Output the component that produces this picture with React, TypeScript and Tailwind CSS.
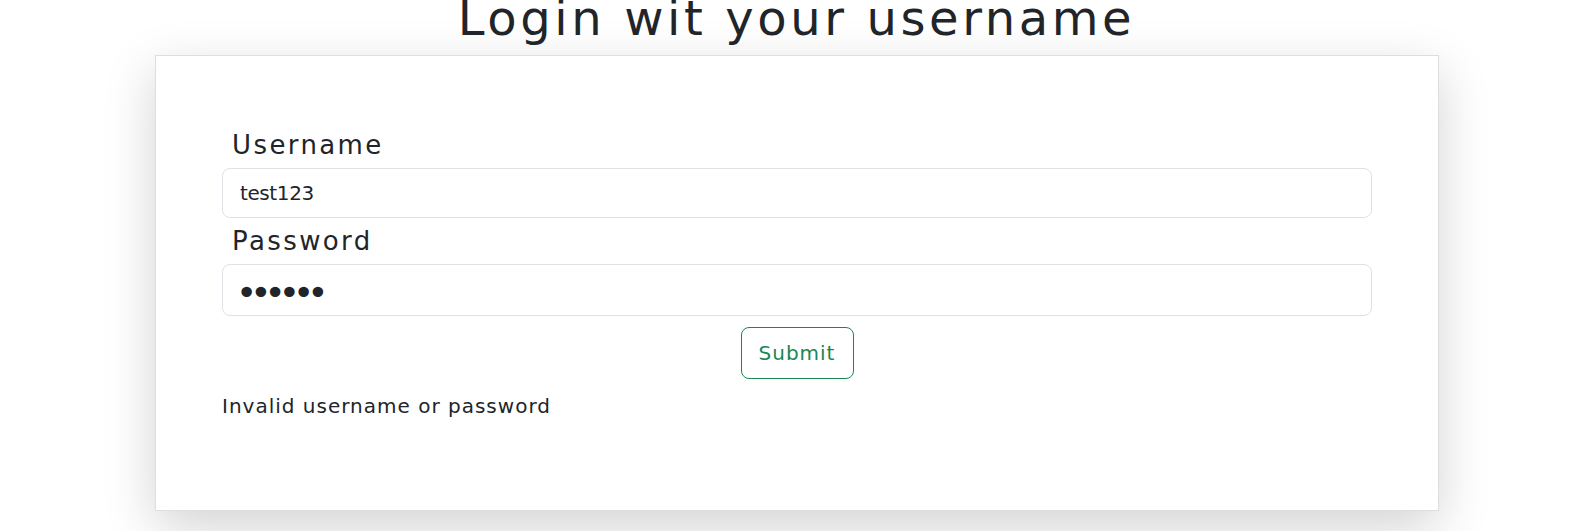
import React from "react";

export default function App() {
  return (
    <div
      className="w-[1571px] h-[531px] overflow-hidden bg-white text-[#212529]"
      style={{ fontFamily: "'DejaVu Sans', sans-serif" }}
    >
      <h1 className="mt-[-18px] h-[73px] ml-[22px] text-center text-[48px] leading-[72px] font-normal tracking-[3.6px]">
        Login wit your username
      </h1>
      <div className="ml-[155px] w-[1284px] h-[456px] border border-[#dedede] bg-white px-[66px] pt-[66px] shadow-[0_16px_48px_rgba(0,0,0,0.175)]">
        <div className="h-[46px] pt-[3px] pl-[10px] text-[26px] leading-[40px] tracking-[2.4px]">Username</div>
        <div className="flex h-[50px] items-center rounded-lg border border-[#dee2e6] px-[17px] text-[20px] tracking-[-0.4px]">
          test123
        </div>
        <div className="h-[46px] pt-[3px] pl-[10px] text-[26px] leading-[40px] tracking-[2.4px]">Password</div>
        <div className="flex h-[52px] items-center rounded-lg border border-[#dee2e6] px-[13px] pt-[5px] text-[36px] tracking-[-7px]">
          ••••••
        </div>
        <div className="mt-[11px] flex justify-center">
          <button className="h-[52px] w-[113px] rounded-lg border border-[#198754] text-[20px] tracking-[1px] text-[#198754]">
            Submit
          </button>
        </div>
        <div className="mt-[13px] text-[20px] leading-[28px] tracking-[1px]">Invalid username or password</div>
      </div>
    </div>
  );
}
